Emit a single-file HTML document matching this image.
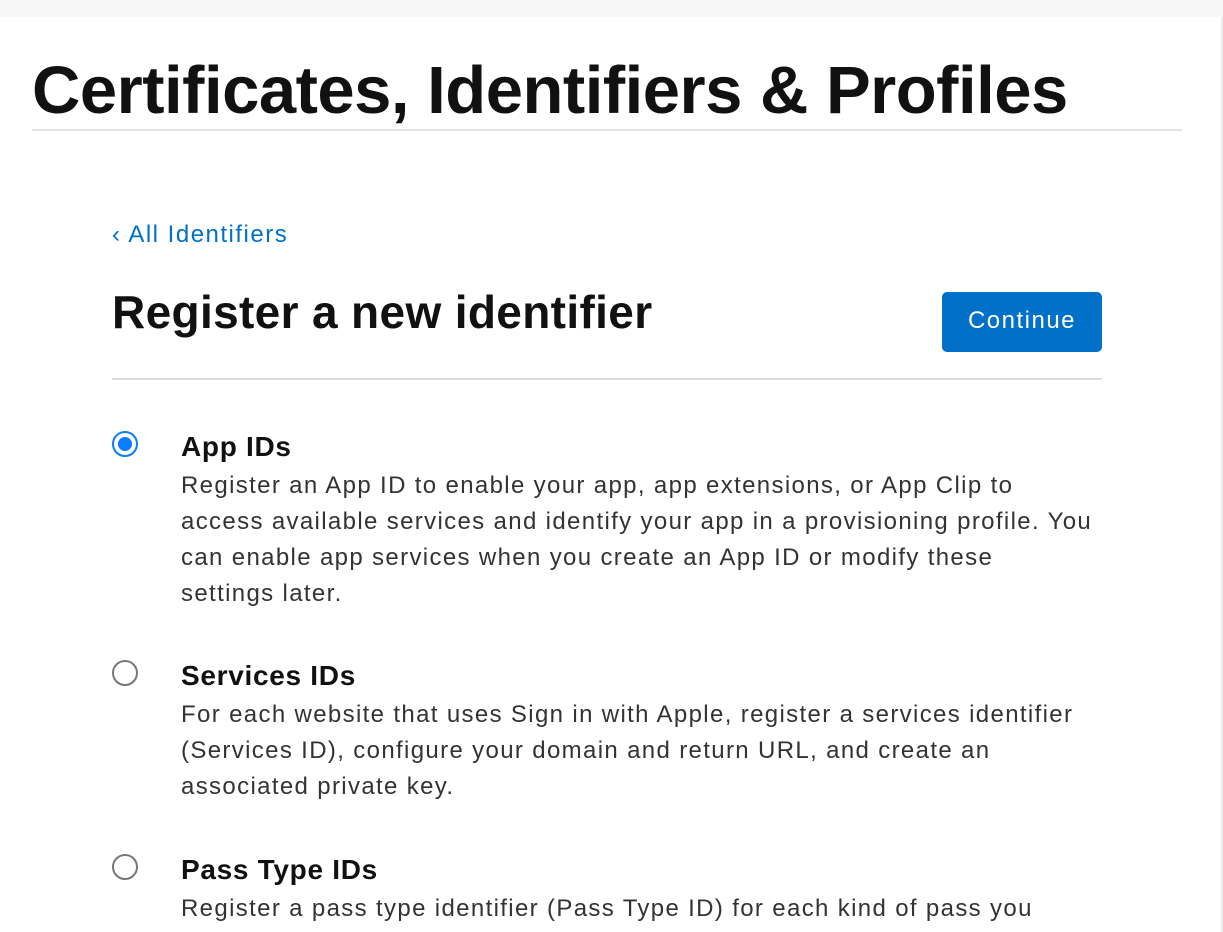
<!DOCTYPE html>
<html><head><meta charset="utf-8"><style>
*{margin:0;padding:0;box-sizing:border-box}
html,body{width:1223px;height:932px;overflow:hidden;background:#fff;font-family:"Liberation Sans",sans-serif;color:#111}
.top{position:absolute;left:0;top:0;width:1223px;height:17px;background:#f7f7f7}
.rs{position:absolute;left:1221px;top:17px;width:2px;height:915px;background:#ececec}
h1{position:absolute;left:32px;top:52px;font-size:67px;font-weight:bold;letter-spacing:-0.5px;white-space:nowrap;color:#111}
.hl{position:absolute;left:32px;top:129px;width:1150px;height:2px;background:#e3e3e3}
.back{position:absolute;left:112px;top:221px;font-size:24px;letter-spacing:1.5px;color:#0070c9}
h2{position:absolute;left:112px;top:285px;font-size:46px;font-weight:bold;letter-spacing:0.35px;white-space:nowrap;color:#111}
.btn{position:absolute;left:942px;top:292px;width:160px;height:60px;background:#0070c9;border-radius:5px;color:#fff;font-size:24px;letter-spacing:1.5px;text-align:center;line-height:58px}
.sep{position:absolute;left:112px;top:378px;width:990px;height:2px;background:#ddd}
.radio{position:absolute;left:112px;width:26px;height:26px;border-radius:50%;border:2px solid #777}
.radio.on{border:2px solid #0a7cff}
.radio.on::after{content:"";position:absolute;left:4px;top:4px;width:14px;height:14px;border-radius:50%;background:#0a7cff}
.opt{position:absolute;left:181px;width:1000px;white-space:nowrap}
.opt b{display:block;font-size:28px;font-weight:bold;letter-spacing:0.7px;color:#111;line-height:34px;margin-bottom:4px}
.opt p{font-size:24px;letter-spacing:1.35px;line-height:36px;color:#333}
</style></head><body>
<div class="top"></div><div class="rs"></div>
<h1>Certificates, Identifiers &amp; Profiles</h1>
<div class="hl"></div>
<div class="back">‹ All Identifiers</div>
<h2>Register a new identifier</h2>
<div class="btn">Continue</div>
<div class="sep"></div>
<div class="radio on" style="top:431px"></div>
<div class="opt" style="top:430px"><b>App IDs</b><p>Register an App ID to enable your app, app extensions, or App Clip to<br>access available services and identify your app in a provisioning profile. You<br>can enable app services when you create an App ID or modify these<br>settings later.</p></div>
<div class="radio" style="top:660px"></div>
<div class="opt" style="top:659px"><b>Services IDs</b><p>For each website that uses Sign in with Apple, register a services identifier<br>(Services ID), configure your domain and return URL, and create an<br>associated private key.</p></div>
<div class="radio" style="top:854px"></div>
<div class="opt" style="top:853px"><b>Pass Type IDs</b><p>Register a pass type identifier (Pass Type ID) for each kind of pass you</p></div>
</body></html>
